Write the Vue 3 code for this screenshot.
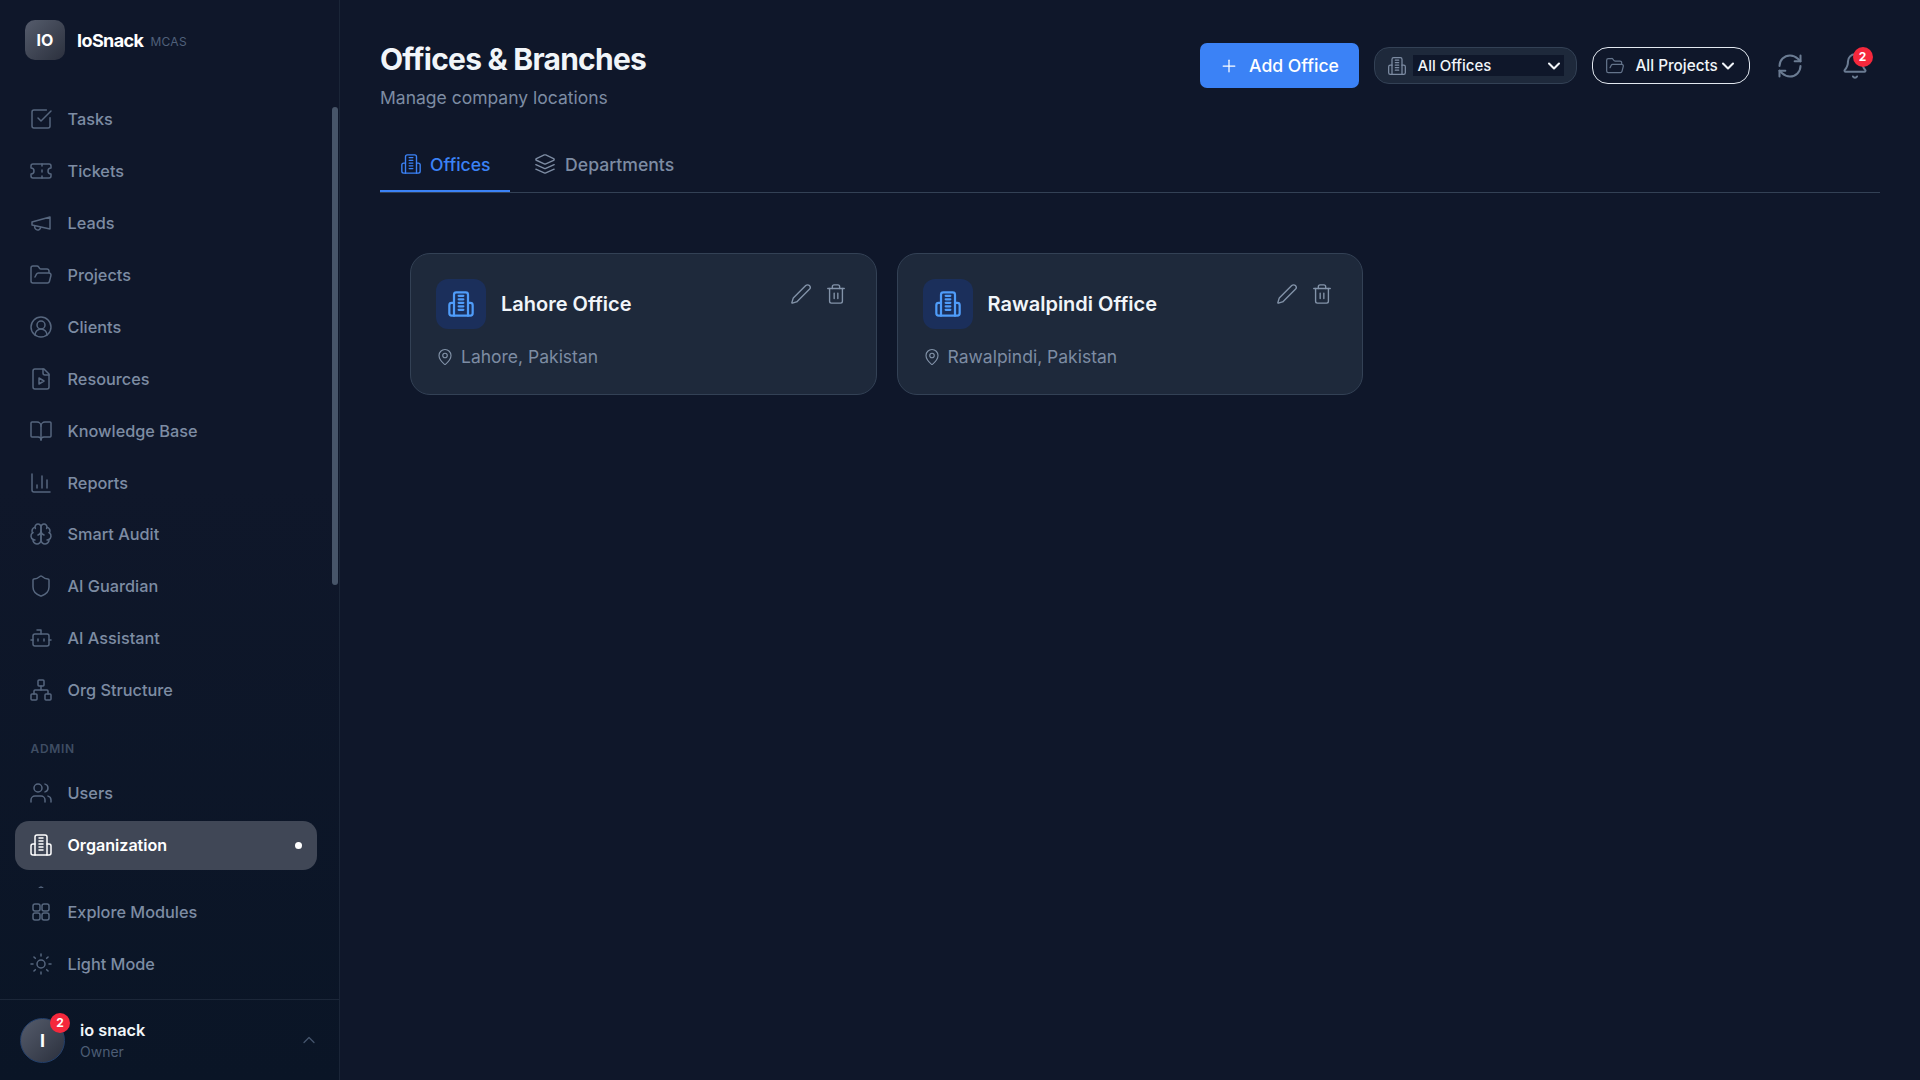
<script setup>
const p = (...ds) => ds.map((d) => `<path d="${d}"/>`).join('')
const building = p('M6 22V4a2 2 0 0 1 2-2h8a2 2 0 0 1 2 2v18Z', 'M6 11H4a2 2 0 0 0-2 2v7a2 2 0 0 0 2 2h2', 'M18 11h2a2 2 0 0 1 2 2v7a2 2 0 0 1-2 2h-2', 'M10 5h4', 'M10 8h4', 'M10 11h4', 'M10 14h4', 'M10 17h4')
const folder = p('m6 14 1.5-2.9A2 2 0 0 1 9.24 10H20a2 2 0 0 1 1.94 2.5l-1.54 6a2 2 0 0 1-1.95 1.5H4a2 2 0 0 1-2-2V5a2 2 0 0 1 2-2h3.9a2 2 0 0 1 1.69.9l.81 1.2a2 2 0 0 0 1.67.9H18a2 2 0 0 1 2 2v2')
const icons = {
  building,
  folder,
  tasks: p('M21 10.656V19a2 2 0 0 1-2 2H5a2 2 0 0 1-2-2V5a2 2 0 0 1 2-2h12.344', 'm9 11 3 3L22 4'),
  ticket: p('M2 9a3 3 0 0 1 0 6v2a2 2 0 0 0 2 2h16a2 2 0 0 0 2-2v-2a3 3 0 0 1 0-6V7a2 2 0 0 0-2-2H4a2 2 0 0 0-2 2Z', 'M13 5v2', 'M13 17v2', 'M13 11v2'),
  mega: p('m3 11 18-5v12L3 14v-3z', 'M11.6 16.8a3 3 0 1 1-5.8-1.6'),
  client: p('M18 20a6 6 0 0 0-12 0') + '<circle cx="12" cy="10" r="4"/><circle cx="12" cy="12" r="10"/>',
  file: p('M15 2H6a2 2 0 0 0-2 2v16a2 2 0 0 0 2 2h12a2 2 0 0 0 2-2V7Z', 'M14 2v4a2 2 0 0 0 2 2h4', 'm10 11 5 3-5 3v-6Z'),
  book: p('M12 7v14', 'M3 18a1 1 0 0 1-1-1V4a1 1 0 0 1 1-1h5a4 4 0 0 1 4 4 4 4 0 0 1 4-4h5a1 1 0 0 1 1 1v13a1 1 0 0 1-1 1h-6a3 3 0 0 0-3 3 3 3 0 0 0-3-3z'),
  chart: p('M3 3v16a2 2 0 0 0 2 2h16', 'M18 17V9', 'M13 17V5', 'M8 17v-3'),
  brain: p('M12 5a3 3 0 1 0-5.997.125 4 4 0 0 0-2.526 5.77 4 4 0 0 0 .556 6.588A4 4 0 1 0 12 18Z', 'M12 5a3 3 0 1 1 5.997.125 4 4 0 0 1 2.526 5.77 4 4 0 0 1-.556 6.588A4 4 0 1 1 12 18Z', 'M15 13a4.5 4.5 0 0 1-3-4 4.5 4.5 0 0 1-3 4', 'M17.599 6.5a3 3 0 0 0 .399-1.375', 'M6.003 5.125A3 3 0 0 0 6.401 6.5', 'M3.477 10.896a4 4 0 0 1 .585-.396', 'M19.938 10.5a4 4 0 0 1 .585.396', 'M6 18a4 4 0 0 1-1.967-.516', 'M19.967 17.484A4 4 0 0 1 18 18'),
  shield: p('M20 13c0 5-3.5 7.5-7.66 8.95a1 1 0 0 1-.67-.01C7.5 20.5 4 18 4 13V6a1 1 0 0 1 1-1c2 0 4.5-1.2 6.24-2.72a1.17 1.17 0 0 1 1.52 0C14.51 3.81 17 5 19 5a1 1 0 0 1 1 1z'),
  bot: p('M12 8V4H8', 'M2 14h2', 'M20 14h2', 'M15 13v2', 'M9 13v2') + '<rect width="16" height="12" x="4" y="8" rx="2"/>',
  network: p('M5 16v-3a1 1 0 0 1 1-1h12a1 1 0 0 1 1 1v3', 'M12 12V8') + '<rect x="16" y="16" width="6" height="6" rx="1"/><rect x="2" y="16" width="6" height="6" rx="1"/><rect x="9" y="2" width="6" height="6" rx="1"/>',
  users: p('M16 21v-2a4 4 0 0 0-4-4H6a4 4 0 0 0-4 4v2', 'M16 3.128a4 4 0 0 1 0 7.744', 'M22 21v-2a4 4 0 0 0-3-3.87') + '<circle cx="9" cy="7" r="4"/>',
  grid: '<rect width="7" height="7" x="4" y="4" rx="2"/><rect width="7" height="7" x="13" y="4" rx="2"/><rect width="7" height="7" x="13" y="13" rx="2"/><rect width="7" height="7" x="4" y="13" rx="2"/>',
  sun: '<circle cx="12" cy="12" r="4"/>' + p('M12 2v2', 'M12 20v2', 'm4.93 4.93 1.41 1.41', 'm17.66 17.66 1.41 1.41', 'M2 12h2', 'M20 12h2', 'm6.34 17.66-1.41 1.41', 'm19.07 4.93-1.41 1.41'),
  layers: p('M12.83 2.18a2 2 0 0 0-1.66 0L2.6 6.08a1 1 0 0 0 0 1.83l8.58 3.91a2 2 0 0 0 1.66 0l8.58-3.9a1 1 0 0 0 0-1.83Z', 'm22 17.65-9.17 4.16a2 2 0 0 1-1.66 0L2 17.65', 'm22 12.65-9.17 4.16a2 2 0 0 1-1.66 0L2 12.65'),
  pen: p('M21.174 6.812a1 1 0 0 0-3.986-3.987L3.842 16.174a2 2 0 0 0-.5.83l-1.321 4.352a.5.5 0 0 0 .623.622l4.353-1.32a2 2 0 0 0 .83-.497z'),
  trash: p('M3 6h18', 'M19 6v14c0 1-1 2-2 2H7c-1 0-2-1-2-2V6', 'M8 6V4c0-1 1-2 2-2h4c1 0 2 1 2 2v2', 'M10 11v6', 'M14 11v6'),
  pin: p('M20 10c0 4.993-5.539 10.193-7.399 11.799a1 1 0 0 1-1.202 0C9.539 20.193 4 14.993 4 10a8 8 0 0 1 16 0') + '<circle cx="12" cy="10" r="3"/>',
  plus: p('M5 12h14', 'M12 5v14'),
  refresh: p('M3 12a9 9 0 0 1 9-9 9.75 9.75 0 0 1 6.74 2.74L21 8', 'M21 3v5h-5', 'M21 12a9 9 0 0 1-9 9 9.75 9.75 0 0 1-6.74-2.74L3 16', 'M8 16H3v5'),
  bell: p('M10.268 21a2 2 0 0 0 3.464 0', 'M3.262 15.326A1 1 0 0 0 4 17h16a1 1 0 0 0 .74-1.673C19.41 13.956 18 12.499 18 8A6 6 0 0 0 6 8c0 4.499-1.411 5.956-2.738 7.326'),
  down: p('m6 9 6 6 6-6'),
  up: p('m18 15-6-6-6 6'),
}
const mainNav = [
  ['tasks', 'Tasks'], ['ticket', 'Tickets'], ['mega', 'Leads'], ['folder', 'Projects'], ['client', 'Clients'],
  ['file', 'Resources'], ['book', 'Knowledge Base'], ['chart', 'Reports'], ['brain', 'Smart Audit'],
  ['shield', 'AI Guardian'], ['bot', 'AI Assistant'], ['network', 'Org Structure'],
]
const offices = [
  { name: 'Lahore Office', place: 'Lahore, Pakistan' },
  { name: 'Rawalpindi Office', place: 'Rawalpindi, Pakistan' },
]
</script>

<template>
  <div class="app">
    <aside class="sidebar">
      <div class="brand">
        <div class="logo">IO</div>
        <span class="brand-name">IoSnack</span>
        <span class="brand-sub">MCAS</span>
      </div>
      <nav class="nav">
        <div class="thumb"></div>
        <a v-for="n in mainNav" :key="n[1]" class="item">
          <svg class="ic" viewBox="0 0 24 24" v-html="icons[n[0]]"></svg>
          <span>{{ n[1] }}</span>
        </a>
        <div class="section">ADMIN</div>
        <a class="item">
          <svg class="ic" viewBox="0 0 24 24" v-html="icons.users"></svg>
          <span>Users</span>
        </a>
        <a class="item active">
          <svg class="ic" viewBox="0 0 24 24" v-html="icons.building"></svg>
          <span>Organization</span>
          <i class="dot"></i>
        </a>
        <a class="item">
          <svg class="ic" viewBox="0 0 24 24" v-html="icons.shield"></svg>
        </a>
      </nav>
      <div class="nav-bottom">
        <a class="item">
          <svg class="ic" viewBox="0 0 24 24" v-html="icons.grid"></svg>
          <span>Explore Modules</span>
        </a>
        <a class="item">
          <svg class="ic" viewBox="0 0 24 24" v-html="icons.sun"></svg>
          <span>Light Mode</span>
        </a>
      </div>
      <div class="profile">
        <div class="avatar">I<b class="badge av-badge">2</b></div>
        <div class="who">
          <div class="who-name">io snack</div>
          <div class="who-role">Owner</div>
        </div>
        <svg class="ic chev-up" viewBox="0 0 24 24" v-html="icons.up"></svg>
      </div>
    </aside>

    <main class="main">
      <header class="top">
        <div class="titles">
          <h1>Offices &amp; Branches</h1>
          <p>Manage company locations</p>
        </div>
        <div class="tools">
          <button class="add">
            <svg class="ic add-ic" viewBox="0 0 24 24" v-html="icons.plus"></svg>
            Add Office
          </button>
          <div class="office-pill">
            <svg class="ic pill-ic office-ic" viewBox="0 0 24 24" v-html="icons.building"></svg>
            <div class="select">
              All Offices
              <svg class="ic sel-chev" viewBox="0 0 24 24" v-html="icons.down"></svg>
            </div>
          </div>
          <div class="project-pill">
            <svg class="ic pill-ic" viewBox="0 0 24 24" v-html="icons.folder"></svg>
            <span>All Projects</span>
            <svg class="ic sel-chev" viewBox="0 0 24 24" v-html="icons.down"></svg>
          </div>
          <svg class="ic refresh" viewBox="0 0 24 24" v-html="icons.refresh"></svg>
          <div class="bell">
            <svg class="ic bell-ic" viewBox="0 0 24 24" v-html="icons.bell"></svg>
            <b class="badge bell-badge">2</b>
          </div>
        </div>
      </header>

      <div class="tabs">
        <div class="tab on">
          <svg class="ic tab-ic" viewBox="0 0 24 24" v-html="icons.building"></svg>
          Offices
        </div>
        <div class="tab">
          <svg class="ic tab-ic" viewBox="0 0 24 24" v-html="icons.layers"></svg>
          Departments
        </div>
      </div>

      <section class="cards">
        <article v-for="o in offices" :key="o.name" class="card">
          <div class="card-head">
            <div class="card-icon">
              <svg class="ic card-ic" viewBox="0 0 24 24" v-html="icons.building"></svg>
            </div>
            <h3>{{ o.name }}</h3>
            <div class="actions">
              <svg class="ic act" viewBox="0 0 24 24" v-html="icons.pen"></svg>
              <svg class="ic act" viewBox="0 0 24 24" v-html="icons.trash"></svg>
            </div>
          </div>
          <div class="place">
            <svg class="ic pin" viewBox="0 0 24 24" v-html="icons.pin"></svg>
            {{ o.place }}
          </div>
        </article>
      </section>
    </main>
  </div>
</template>

<style>
html, body { margin: 0; background: #0f172a; }
</style>

<style scoped>
.app {
  display: flex;
  width: 1920px;
  height: 1080px;
  overflow: hidden;
  background: #0f172a;
  font-family: Inter, "Liberation Sans", sans-serif;
  color: #f1f5f9;
}
.ic {
  width: 24px;
  height: 24px;
  flex: none;
  fill: none;
  stroke: currentColor;
  stroke-width: 1.5;
  stroke-linecap: round;
  stroke-linejoin: round;
}
.sidebar {
  width: 340px;
  height: 1080px;
  flex: none;
  box-sizing: border-box;
  display: flex;
  flex-direction: column;
  border-right: 1px solid #1a2537;
  background: linear-gradient(180deg, #0f172a 0%, #0f172a 45%, #0a1526 100%);
}
.brand {
  height: 80px;
  flex: none;
  box-sizing: border-box;
  padding-left: 25px;
  display: flex;
  align-items: center;
}
.logo {
  width: 40px;
  height: 40px;
  border-radius: 10px;
  background: linear-gradient(135deg, #555c6c, #2b303d);
  display: flex;
  align-items: center;
  justify-content: center;
  font-weight: 700;
  font-size: 16px;
  color: #fff;
}
.brand-name {
  margin-left: 12px;
  font-size: 18px;
  font-weight: 700;
  letter-spacing: -0.6px;
  color: #fff;
}
.brand-sub {
  margin-left: 7px;
  margin-top: 3px;
  font-size: 12px;
  letter-spacing: 0.3px;
  color: #50607a;
}
.nav {
  height: 808px;
  flex: none;
  box-sizing: border-box;
  overflow: hidden;
  position: relative;
  padding: 15.47px 22px 0 15px;
}
.thumb {
  position: absolute;
  right: 1px;
  top: 27px;
  width: 6px;
  height: 478px;
  border-radius: 3px;
  background: #475569;
}
.item {
  height: 48px;
  margin-bottom: 3.88px;
  box-sizing: border-box;
  padding: 0 14px;
  border-radius: 14px;
  display: flex;
  align-items: center;
  gap: 14.5px;
  font-size: 16.3px;
  font-weight: 500;
  color: #7d8ca3;
}
.item .ic { color: #56667e; }
.item.active {
  height: 49px;
  margin-bottom: 2.88px;
  background: #404756;
  color: #fff;
  font-size: 16.1px;
  font-weight: 600;
}
.item.active .ic { color: #fff; }
.dot {
  margin-left: auto;
  margin-right: 1px;
  width: 7px;
  height: 7px;
  border-radius: 50%;
  background: #fff;
}
.section {
  height: 36px;
  margin-top: 19px;
  padding-left: 15.5px;
  box-sizing: border-box;
  padding-top: 8px;
  font-size: 12px;
  font-weight: 600;
  letter-spacing: 0.7px;
  color: #3f4d63;
}
.nav-bottom {
  flex: none;
  height: 111px;
  box-sizing: border-box;
  padding: 0 22px 0 15px;
}
.profile {
  flex: 1;
  border-top: 1px solid #1c2739;
  display: flex;
  align-items: center;
  padding: 0 20px 0 20px;
  gap: 15px;
}
.avatar {
  position: relative;
  width: 45px;
  height: 45px;
  box-sizing: border-box;
  border-radius: 50%;
  border: 1px solid #24406b;
  background: linear-gradient(135deg, #555c6c, #2b303d);
  display: flex;
  align-items: center;
  justify-content: center;
  font-weight: 700;
  font-size: 18px;
  color: #fff;
}
.badge {
  position: absolute;
  width: 20px;
  height: 20px;
  border-radius: 50%;
  background: #f5283c;
  color: #fff;
  font-size: 12px;
  font-weight: 700;
  display: flex;
  align-items: center;
  justify-content: center;
}
.av-badge { top: -6px; right: -6px; }
.who { flex: 1; }
.who-name { font-size: 16.3px; font-weight: 600; color: #f1f5f9; line-height: 22px; }
.who-role { font-size: 14px; color: #4d5d75; line-height: 20px; margin-top: 1px; }
.chev-up { width: 20px; height: 20px; color: #45556d; }

.main {
  flex: 1;
  min-width: 0;
  padding: 0 40px;
  display: flex;
  flex-direction: column;
}
.top {
  height: 126px;
  flex: none;
  box-sizing: border-box;
  display: flex;
  justify-content: space-between;
}
.titles { padding-top: 40px; }
h1 {
  margin: 0;
  font-size: 30px;
  line-height: 38px;
  font-weight: 700;
  letter-spacing: -0.75px;
  color: #f1f5f9;
}
.titles p {
  margin: 8px 0 0;
  font-size: 17.5px;
  line-height: 24px;
  color: #7d8ca3;
}
.tools {
  height: 45px;
  margin-top: 43px;
  margin-right: 11.5px;
  display: flex;
  align-items: center;
}
.add {
  width: 159px;
  height: 45px;
  border: 0;
  border-radius: 7px;
  background: #3b82f6;
  color: #fff;
  font: 500 17.6px Inter, sans-serif;
  display: flex;
  align-items: center;
  justify-content: center;
  gap: 10px;
}
.add-ic { width: 20px; height: 20px; }
.office-pill {
  width: 203px;
  height: 37px;
  margin-left: 15px;
  box-sizing: border-box;
  background: #1e293b;
  border: 1px solid #334155;
  border-radius: 15px;
  display: flex;
  align-items: center;
  padding-left: 12px;
}
.pill-ic { width: 20px; height: 20px; color: #64748b; }
.office-ic { color: #7d8ca3; }
.select {
  width: 151px;
  height: 21px;
  margin-left: 6px;
  background: #0f172a;
  display: flex;
  align-items: center;
  justify-content: space-between;
  padding: 0 0 0 5px;
  box-sizing: border-box;
  font-size: 15px;
  font-weight: 500;
  color: #f1f5f9;
}
.sel-chev { width: 20px; height: 20px; color: #f1f5f9; stroke-width: 2.5; }
.project-pill {
  width: 158px;
  height: 37px;
  margin-left: 15px;
  box-sizing: border-box;
  border: 1px solid #e2e8f0;
  border-radius: 16px;
  display: flex;
  align-items: center;
  padding-left: 12px;
  font-size: 15.3px;
  font-weight: 500;
  color: #f1f5f9;
}
.project-pill span { margin-left: 11px; }
.refresh { margin-left: 26px; width: 28px; height: 28px; color: #6b7c93; stroke-width: 1.75; }
.bell {
  position: relative;
  margin-left: 37px;
  width: 28px;
  height: 28px;
}
.bell-ic { width: 28px; height: 28px; color: #6b7c93; stroke-width: 1.75; }
.bell-badge { top: -5px; right: -4px; }

.tabs {
  height: 67px;
  flex: none;
  box-sizing: border-box;
  display: flex;
  align-items: flex-start;
  gap: 4px;
  border-bottom: 1px solid #334155;
}
.tab {
  height: 66px;
  box-sizing: border-box;
  padding: 12px 19px 0 20px;
  border-bottom: 2px solid transparent;
  display: flex;
  align-items: center;
  gap: 8px;
  font-size: 17.6px;
  font-weight: 500;
  color: #7d8ca3;
}
.tab + .tab { gap: 9.5px; }
.tab.on { color: #3b82f6; border-bottom-color: #3b82f6; }
.tab-ic { width: 22px; height: 22px; }
.cards {
  display: flex;
  gap: 20px;
  padding: 60px 30px 0;
}
.card {
  width: 466.5px;
  height: 142px;
  box-sizing: border-box;
  padding: 25px;
  background: #1e293b;
  border: 1px solid #334155;
  border-radius: 20px;
}
.card-head {
  display: flex;
  align-items: center;
  height: 50px;
}
.card-icon {
  width: 50px;
  height: 50px;
  border-radius: 12px;
  background: #1b2f5b;
  display: flex;
  align-items: center;
  justify-content: center;
}
.card-ic { width: 28px; height: 28px; color: #4f9cf9; stroke-width: 1.9; }
h3 {
  margin: 0 0 0 15px;
  font-size: 20px;
  font-weight: 600;
  color: #f1f5f9;
}
.actions {
  margin-left: auto;
  align-self: flex-start;
  display: flex;
  gap: 13px;
  margin-top: 4px;
  margin-right: 4px;
}
.act { width: 22px; height: 22px; color: #8393a9; }
.place {
  margin-top: 14px;
  display: flex;
  align-items: center;
  gap: 7px;
  font-size: 17.5px;
  line-height: 28px;
  color: #7d8ca3;
}
.pin { width: 18px; height: 18px; color: #8393a9; }
</style>
